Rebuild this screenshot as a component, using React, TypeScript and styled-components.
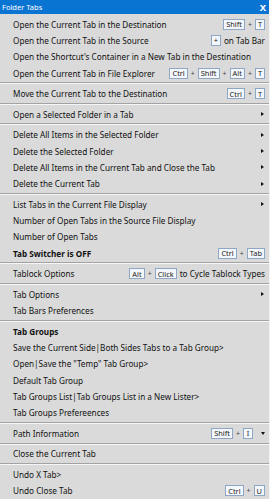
import styled, { createGlobalStyle } from "styled-components";

const Global = createGlobalStyle`
  html, body {
    margin: 0;
    padding: 0;
    background: #dadada;
  }
  body {
    font-family: "Noto Sans", "Open Sans", sans-serif;
  }
`;

const Menu = styled.div`
  width: 270px;
  height: 499px;
  background: #dadada;
  border-right: 1px solid #f4f4f4;
  box-sizing: border-box;
  overflow: hidden;
`;

const TitleBar = styled.div`
  height: 14px;
  background: #0a74d2;
  color: #ffffff;
  display: flex;
  align-items: center;
  justify-content: space-between;
  padding: 0 3px 0 2px;
  font-size: 7.5px;
`;

const Close = styled.span`
  font-size: 9.5px;
  font-weight: 700;
`;

const List = styled.div`
  padding-top: 2px;
`;

const Row = styled.div<{ $bold?: boolean }>`
  height: 16.3px;
  display: flex;
  align-items: center;
  justify-content: space-between;
  padding: 0 4px 0 13px;
  font-size: 8.2px;
  color: #111;
  font-weight: ${(p) => (p.$bold ? 700 : 400)};
  white-space: nowrap;
`;

const Right = styled.div`
  display: flex;
  align-items: center;
  gap: 3px;
  font-weight: 400;
`;

const Key = styled.span`
  display: inline-flex;
  align-items: center;
  justify-content: center;
  min-width: 10px;
  height: 11px;
  padding: 0 2px;
  box-sizing: border-box;
  border: 1px solid #8fa7c6;
  background: #f3f6fa;
  font-size: 7.4px;
  color: #222;
`;

const Plus = styled.span`
  font-size: 7px;
  color: #444;
`;

const Arrow = styled.span`
  width: 0;
  height: 0;
  border-top: 2.5px solid transparent;
  border-bottom: 2.5px solid transparent;
  border-left: 3px solid #111;
  margin-left: 4px;
  margin-right: 1px;
`;

const DownArrow = styled.span`
  width: 0;
  height: 0;
  border-left: 2.5px solid transparent;
  border-right: 2.5px solid transparent;
  border-top: 3px solid #111;
  margin-left: 5px;
`;

const Separator = styled.div`
  margin: 1.15px 0;
  height: 1px;
  background: #a3a3a3;
  border-bottom: 1px solid #f6f6f6;
`;

function Keys({ keys }: { keys: string[] }) {
  return (
    <>
      {keys.map((k, i) => (
        <span key={k} style={{ display: "contents" }}>
          {i > 0 && <Plus>+</Plus>}
          <Key>{k}</Key>
        </span>
      ))}
    </>
  );
}

export default function App() {
  return (
    <Menu>
      <Global />
      <TitleBar>
        <span>Folder Tabs</span>
        <Close>X</Close>
      </TitleBar>
      <List>
        <Row>
          Open the Current Tab in the Destination
          <Right>
            <Keys keys={["Shift", "T"]} />
          </Right>
        </Row>
        <Row>
          Open the Current Tab in the Source
          <Right>
            <Key>+</Key>
            <span>on Tab Bar</span>
          </Right>
        </Row>
        <Row>Open the Shortcut's Container in a New Tab in the Destination</Row>
        <Row>
          Open the Current Tab in File Explorer
          <Right>
            <Keys keys={["Ctrl", "Shift", "Alt", "T"]} />
          </Right>
        </Row>
        <Separator />
        <Row>
          Move the Current Tab to the Destination
          <Right>
            <Keys keys={["Ctrl", "T"]} />
          </Right>
        </Row>
        <Separator />
        <Row>
          Open a Selected Folder in a Tab
          <Arrow />
        </Row>
        <Separator />
        <Row>
          Delete All Items in the Selected Folder
          <Arrow />
        </Row>
        <Row>
          Delete the Selected Folder
          <Arrow />
        </Row>
        <Row>
          Delete All Items in the Current Tab and Close the Tab
          <Arrow />
        </Row>
        <Row>
          Delete the Current Tab
          <Arrow />
        </Row>
        <Separator />
        <Row>
          List Tabs in the Current File Display
          <Arrow />
        </Row>
        <Row>Number of Open Tabs in the Source File Display</Row>
        <Row>Number of Open Tabs</Row>
        <Row $bold>
          Tab Switcher is OFF
          <Right>
            <Keys keys={["Ctrl", "Tab"]} />
          </Right>
        </Row>
        <Separator />
        <Row>
          Tablock Options
          <Right>
            <Keys keys={["Alt", "Click"]} />
            <span>to Cycle Tablock Types</span>
          </Right>
        </Row>
        <Separator />
        <Row>
          Tab Options
          <Arrow />
        </Row>
        <Row>Tab Bars Preferences</Row>
        <Separator />
        <Row $bold>Tab Groups</Row>
        <Row>Save the Current Side|Both Sides Tabs to a Tab Group&gt;</Row>
        <Row>Open|Save the "Temp" Tab Group&gt;</Row>
        <Row>Default Tab Group</Row>
        <Row>Tab Groups List|Tab Groups List in a New Lister&gt;</Row>
        <Row>Tab Groups Prefereences</Row>
        <Separator />
        <Row>
          Path Information
          <Right>
            <Keys keys={["Shift", "I"]} />
            <DownArrow />
          </Right>
        </Row>
        <Separator />
        <Row>Close the Current Tab</Row>
        <Separator />
        <Row>Undo X Tab&gt;</Row>
        <Row>
          Undo Close Tab
          <Right>
            <Keys keys={["Ctrl", "U"]} />
          </Right>
        </Row>
      </List>
    </Menu>
  );
}
